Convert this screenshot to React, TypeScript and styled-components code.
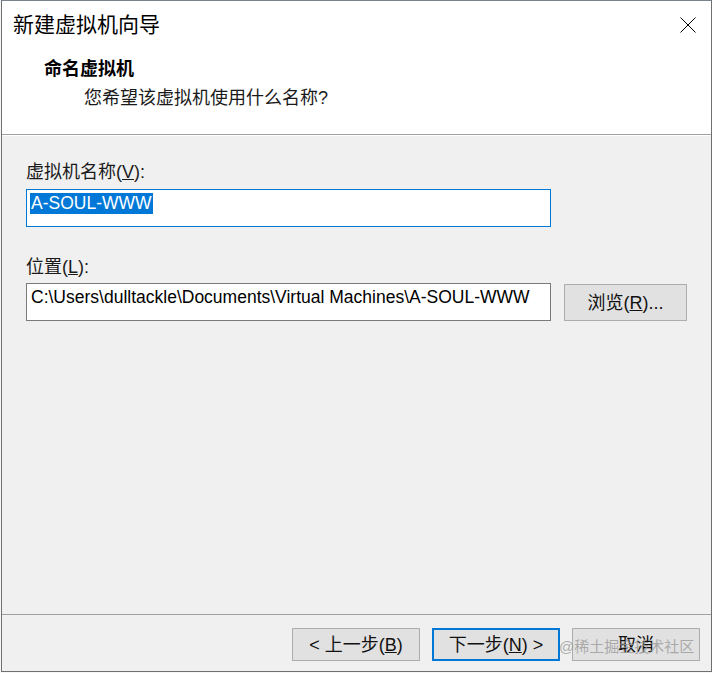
import React from "react";
import styled, { createGlobalStyle } from "styled-components";

const GlobalStyle = createGlobalStyle`
  html, body {
    margin: 0;
    padding: 0;
    background: #f7f7f7;
  }
  body {
    font-family: "Liberation Sans", "Noto Sans CJK SC", sans-serif;
    color: #000;
  }
`;

const Window = styled.div`
  box-sizing: border-box;
  width: 711px;
  height: 672px;
  margin-left: 1px;
  border: 1px solid #6f6f6f;
  border-top-color: #7b8290;
  background: #f0f0f0;
  display: flex;
  flex-direction: column;
`;

const Header = styled.div`
  background: #fff;
  border-bottom: 1px solid #a0a0a0;
  padding-bottom: 24px;
`;

const TitleBar = styled.div`
  height: 47px;
  display: flex;
  align-items: center;
  justify-content: space-between;
  padding: 0 15px 0 11px;
`;

const Title = styled.div`
  font-size: 21px;
  line-height: 26px;
  color: #000;
`;

const CloseIcon = styled.svg`
  width: 16px;
  height: 16px;
  display: block;
`;

const Heading = styled.div`
  margin: 9px 0 0 42px;
  font-size: 18px;
  line-height: 24px;
  font-weight: 700;
`;

const Subtitle = styled.div`
  margin: 5px 0 0 82px;
  font-size: 18px;
  line-height: 24px;
  color: #1a1a1a;
`;

const Body = styled.div`
  flex: 1;
  border-top: 1px solid #fff;
  padding: 24px 0 0 24px;
`;

const Label = styled.div<{ $gap?: number }>`
  margin-top: ${(p) => p.$gap ?? 0}px;
  font-size: 18px;
  line-height: 24px;
  color: #1a1a1a;
`;

const Row = styled.div`
  display: flex;
  align-items: flex-start;
  gap: 13px;
  margin-top: 4px;
`;

const Field = styled.div<{ $focused?: boolean }>`
  box-sizing: border-box;
  width: 525px;
  height: 38px;
  margin-top: ${(p) => (p.$focused ? 5 : 0)}px;
  padding: 3px ${(p) => (p.$focused ? 3 : 4)}px;
  background: #fff;
  border: 1px solid ${(p) => (p.$focused ? "#0078d7" : "#7a7a7a")};
  font-size: 17.5px;
  line-height: 21px;
  white-space: nowrap;
  overflow: hidden;
`;

const Selected = styled.span`
  display: inline-block;
  background: #0078d7;
  color: #fff;
  padding: 0 1px;
`;

const Button = styled.div<{ $default?: boolean; $width?: number }>`
  box-sizing: border-box;
  width: ${(p) => p.$width ?? 128}px;
  height: 33px;
  display: flex;
  align-items: center;
  justify-content: center;
  background: #e1e1e1;
  border: ${(p) => (p.$default ? "2px solid #0078d7" : "1px solid #adadad")};
  font-size: 18px;
  line-height: 22px;
  color: #111;
  white-space: pre;
`;

const BrowseButton = styled(Button)`
  height: 37px;
  margin-top: 1px;
`;

const Footer = styled.div`
  position: relative;
  box-sizing: border-box;
  height: 57px;
  border-top: 1px solid #a0a0a0;
  padding: 13px 11px 0 0;
  display: flex;
  justify-content: flex-end;
  gap: 12px;
`;

const Watermark = styled.div`
  position: absolute;
  left: 557px;
  top: 22px;
  font-size: 15px;
  line-height: 20px;
  color: rgba(150, 150, 150, 0.75);
  pointer-events: none;
`;

export default function App() {
  return (
    <>
      <GlobalStyle />
      <Window>
        <Header>
          <TitleBar>
            <Title>新建虚拟机向导</Title>
            <CloseIcon viewBox="0 0 16 16">
              <path d="M0.5 0.5 L15.5 15.5 M15.5 0.5 L0.5 15.5" stroke="#000" strokeWidth="1" fill="none" />
            </CloseIcon>
          </TitleBar>
          <Heading>命名虚拟机</Heading>
          <Subtitle>您希望该虚拟机使用什么名称?</Subtitle>
        </Header>
        <Body>
          <Label>
            虚拟机名称(<u>V</u>):
          </Label>
          <Field $focused>
            <Selected>A-SOUL-WWW</Selected>
          </Field>
          <Label $gap={28}>
            位置(<u>L</u>):
          </Label>
          <Row>
            <Field>C:\Users\dulltackle\Documents\Virtual Machines\A-SOUL-WWW</Field>
            <BrowseButton $width={123}>
              浏览(<u>R</u>)...
            </BrowseButton>
          </Row>
        </Body>
        <Footer>
          <Button>
            {"< 上一步("}
            <u>B</u>)
          </Button>
          <Button $default>
            下一步(<u>N</u>
            {") >"}
          </Button>
          <Button>取消</Button>
          <Watermark>@稀土掘金技术社区</Watermark>
        </Footer>
      </Window>
    </>
  );
}
